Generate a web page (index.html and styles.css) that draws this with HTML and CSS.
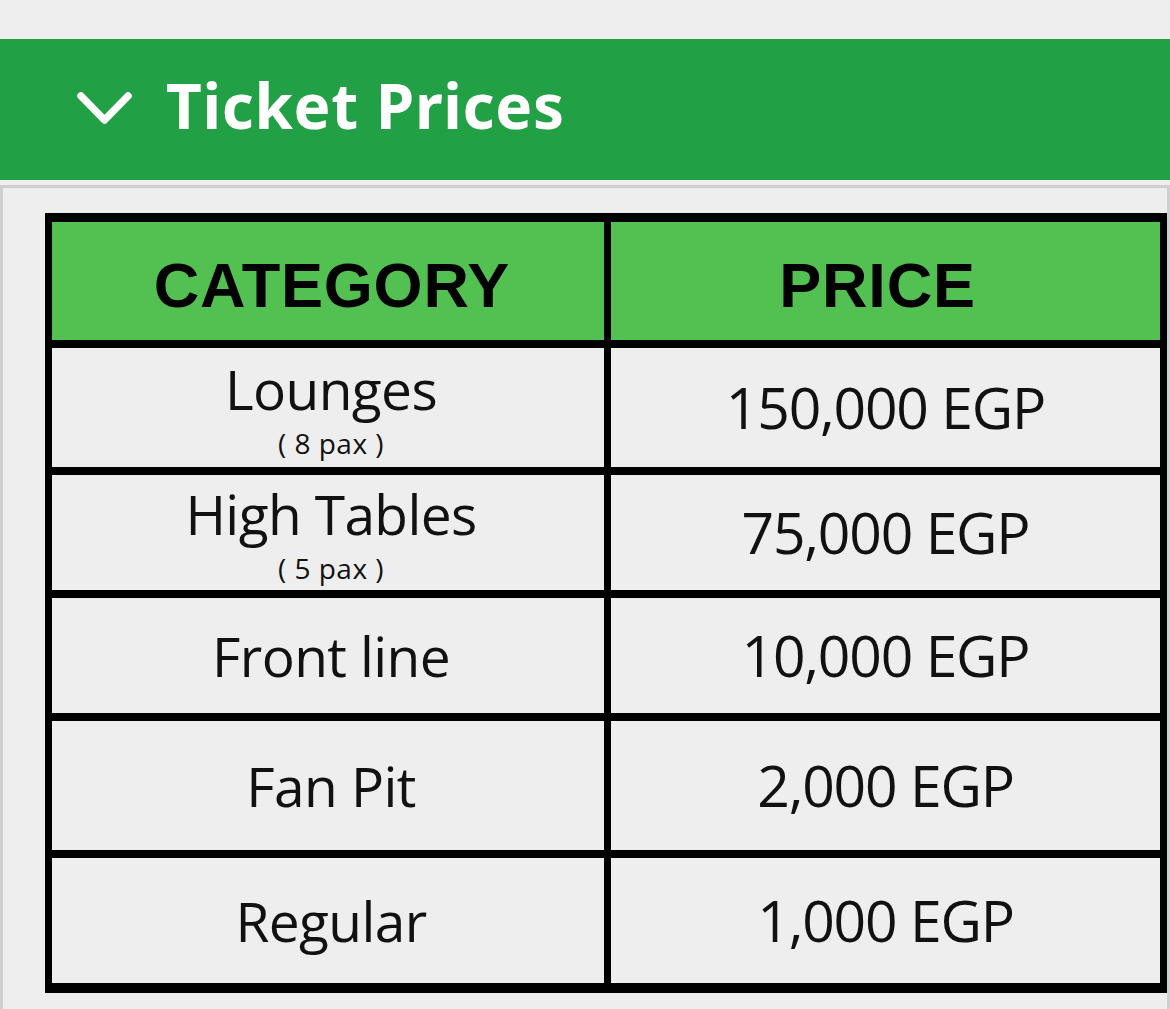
FILE: index.html
```html
<!DOCTYPE html>
<html lang="en">
<head>
<meta charset="utf-8">
<title>Ticket Prices</title>
<link rel="stylesheet" href="styles.css">
</head>
<body>
<section class="accordion">
  <div class="accordion-header">
    <svg class="chevron" width="58" height="36" viewBox="0 0 58 36" aria-hidden="true">
      <polyline points="5,5 28.5,29 52,5" fill="none" stroke="#ffffff" stroke-width="7.5" stroke-linecap="round" stroke-linejoin="round"/>
    </svg>
    <h2 class="accordion-title">Ticket Prices</h2>
  </div>
  <div class="accordion-body">
    <div class="price-table">
      <div class="cell head head-cat">CATEGORY</div>
      <div class="cell head head-price">PRICE</div>

      <div class="cell cat"><span class="name">Lounges</span><span class="pax">( 8 pax )</span></div>
      <div class="cell price">150,000 EGP</div>

      <div class="cell cat"><span class="name">High Tables</span><span class="pax">( 5 pax )</span></div>
      <div class="cell price">75,000 EGP</div>

      <div class="cell cat"><span class="name">Front line</span></div>
      <div class="cell price">10,000 EGP</div>

      <div class="cell cat"><span class="name">Fan Pit</span></div>
      <div class="cell price">2,000 EGP</div>

      <div class="cell cat"><span class="name">Regular</span></div>
      <div class="cell price">1,000 EGP</div>
    </div>
  </div>
</section>
</body>
</html>
```

FILE: styles.css
```css
html, body {
  margin: 0;
  padding: 0;
  background: #eeeeee;
}

body {
  font-family: "Open Sans", "Noto Sans", sans-serif;
  overflow: hidden;
  height: 1009px;
}

.accordion {
  padding-top: 39px;
}

.accordion-header {
  height: 141px;
  background: #21a045;
  display: flex;
  align-items: center;
  padding-left: 76px;
  gap: 32px;
  box-sizing: border-box;
}

.chevron {
  display: block;
  margin-top: -2px;
}

.accordion-title {
  margin: 0;
  color: #ffffff;
  font-family: "Noto Sans", "Open Sans", sans-serif;
  font-weight: 700;
  font-size: 62px;
  letter-spacing: 0.7px;
  line-height: 1;
  margin-top: -10px;
}

.accordion-body {
  margin-top: 5px;
  border: 3px solid #cfcfcf;
  border-bottom: none;
  padding: 25px 0 0 42px;
  background: #eeeeee;
  height: 824px;
  box-sizing: border-box;
}

.price-table {
  display: grid;
  grid-template-columns: 552px 549px;
  grid-template-rows: 118px 119px 115px 115px 129px 125px;
  column-gap: 7px;
  row-gap: 8px;
  padding: 9px 7px 10px 7px;
  background: #000000;
  width: 1108px;
}

.cell {
  background: #eeeeee;
  display: flex;
  flex-direction: column;
  align-items: center;
  justify-content: center;
  color: #111111;
}

.cell.head {
  background: #52c152;
  font-family: "Liberation Sans", Arial, sans-serif;
  font-weight: 700;
  font-size: 63px;
  color: #000000;
  line-height: 1;
  padding-top: 8px;
  letter-spacing: 0.8px;
}

.cell.head-cat {
  padding-left: 8px;
}

.cell.head-price {
  padding-right: 16px;
}

.cell.price {
  font-size: 57px;
  letter-spacing: -1.2px;
  line-height: 1;
}

.cell.cat {
  padding-left: 6px;
}

.cell.cat .name {
  font-size: 55px;
  letter-spacing: -0.6px;
  line-height: normal;
}

.cell.cat .pax {
  font-size: 28px;
  letter-spacing: 0.5px;
  line-height: normal;
  margin-top: -2px;
  margin-bottom: 3px;
}
```
